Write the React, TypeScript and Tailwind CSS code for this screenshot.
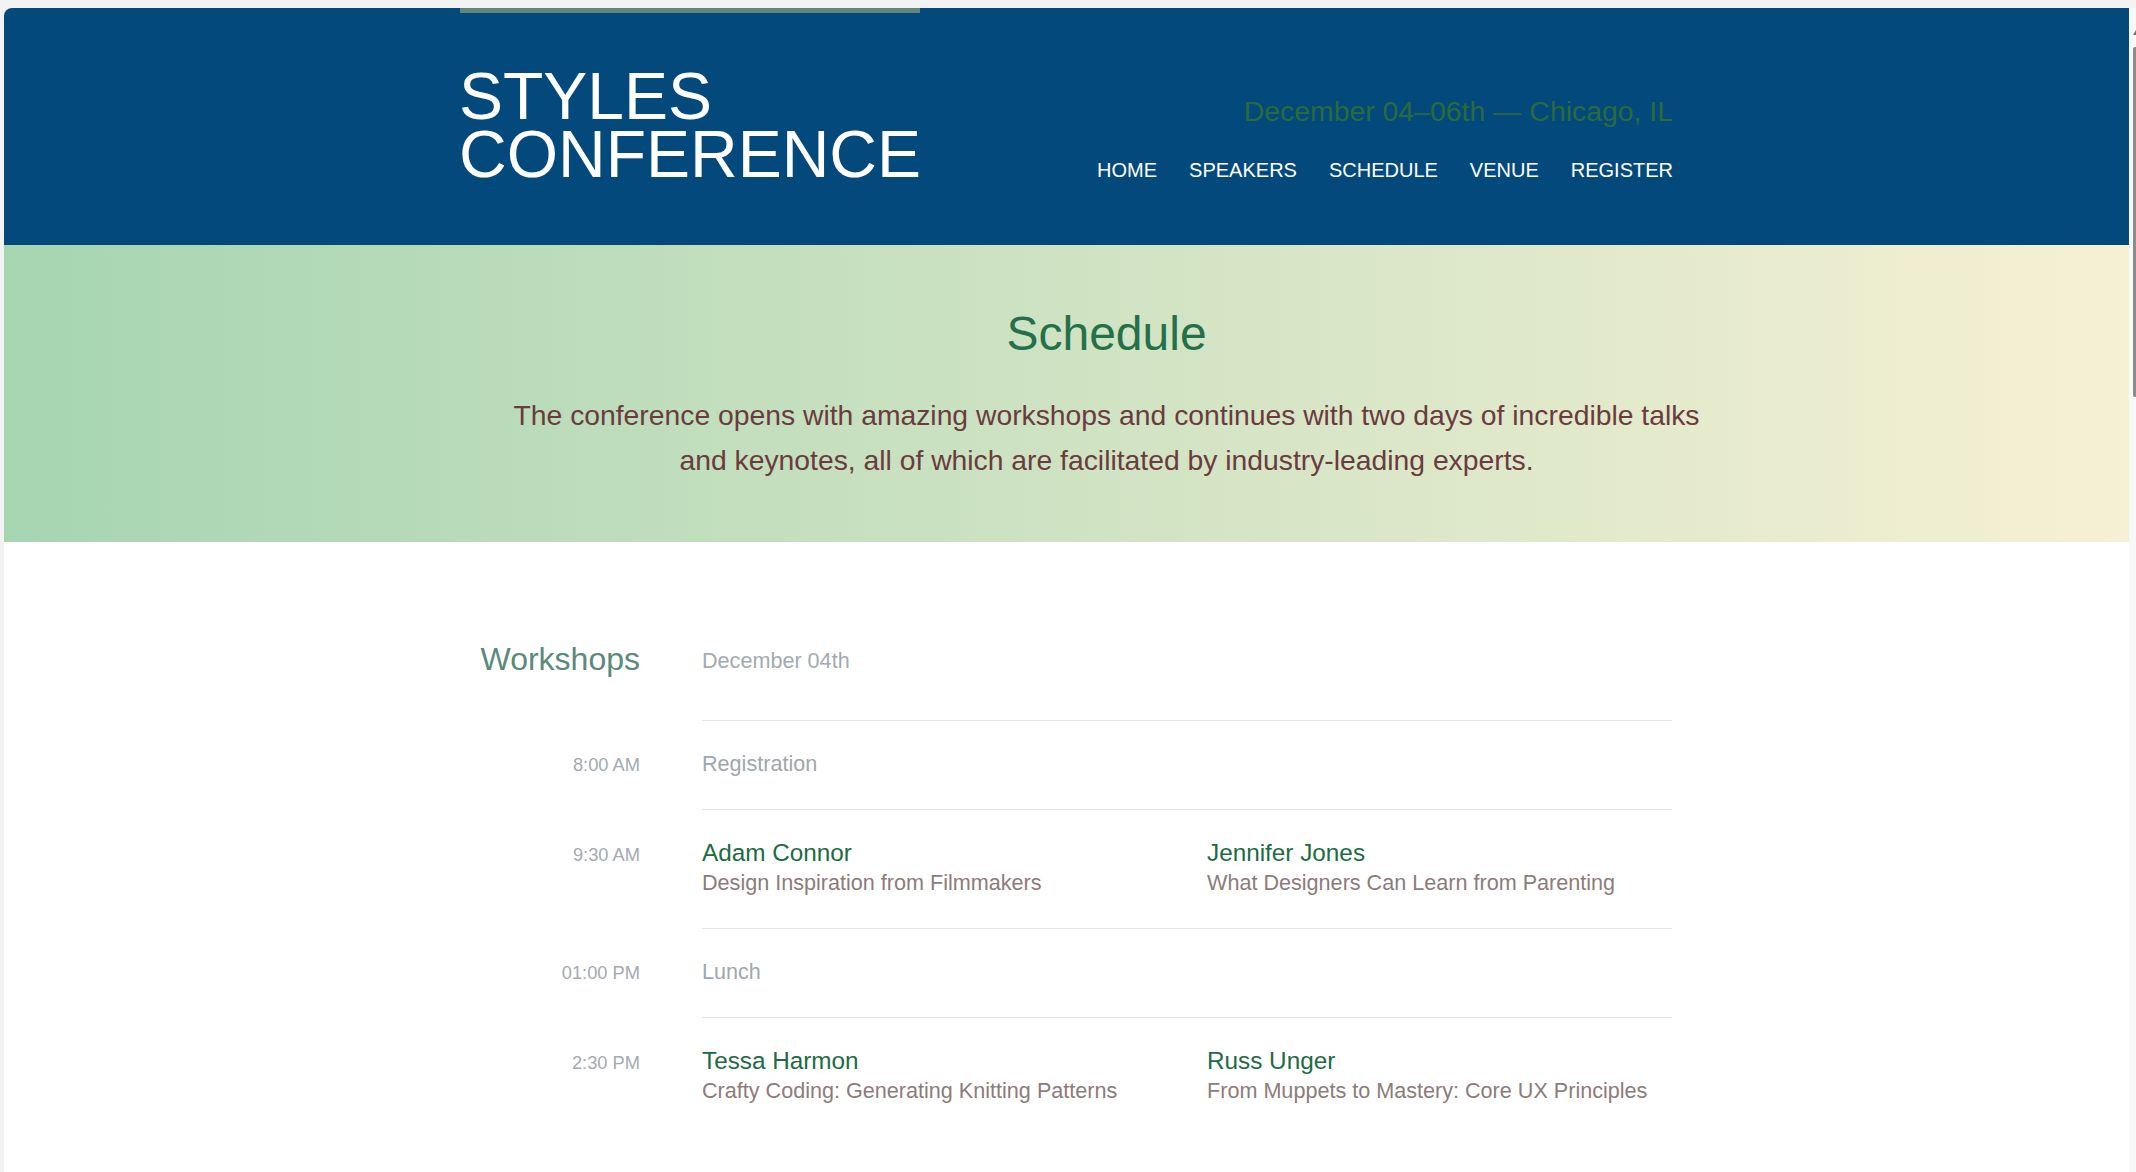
const font = { fontFamily: '"Liberation Sans", Arial, sans-serif' };

const nav = ['HOME', 'SPEAKERS', 'SCHEDULE', 'VENUE', 'REGISTER'];

type Talk = { name: string; title: string };
type Row = { time: string; label?: string; talks?: Talk[] };

const rows: Row[] = [
  { time: '8:00 AM', label: 'Registration' },
  {
    time: '9:30 AM',
    talks: [
      { name: 'Adam Connor', title: 'Design Inspiration from Filmmakers' },
      { name: 'Jennifer Jones', title: 'What Designers Can Learn from Parenting' },
    ],
  },
  { time: '01:00 PM', label: 'Lunch' },
  {
    time: '2:30 PM',
    talks: [
      { name: 'Tessa Harmon', title: 'Crafty Coding: Generating Knitting Patterns' },
      { name: 'Russ Unger', title: 'From Muppets to Mastery: Core UX Principles' },
    ],
  },
];

function ScheduleRow({ row }: { row: Row }) {
  return (
    <div className="flex items-baseline">
      <div className="w-[178px] mr-[62px] shrink-0 text-right text-[18.3px] leading-[32px] text-[#a3abb1]">
        {row.time}
      </div>
      <div className="flex-1 border-t border-[#e2e4e6] pt-[28px] pb-[30px]">
        {row.label ? (
          <p className="text-[21.6px] leading-[30px] text-[#9fa7ad]">{row.label}</p>
        ) : (
          <div className="grid grid-cols-2 gap-x-[40px]">
            {row.talks!.map((t) => (
              <div key={t.name}>
                <p className="text-[24.3px] leading-[30px] text-[#1c6b43]">{t.name}</p>
                <p className="text-[21.6px] leading-[30px] text-[#8c7c7a]">{t.title}</p>
              </div>
            ))}
          </div>
        )}
      </div>
    </div>
  );
}

export default function App() {
  return (
    <div className="w-[2136px] h-[1172px] overflow-hidden bg-[#f3f3f3] flex pt-[8px] pl-[4px]" style={font}>
      <main className="w-[2125px] rounded-tl-[8px] bg-white overflow-hidden">
        {/* HEADER */}
        <header className="bg-[#03497c] h-[237px]">
          <div className="w-[1213px] mx-auto flex justify-between">
            <div className="flex flex-col">
              <div className="h-[5px] w-[460px] bg-[#5f877a]" />
              <h1 className="mt-[54px] text-white text-[66px] leading-[58px] -ml-[1px]">
                STYLES
                <br />
                CONFERENCE
              </h1>
            </div>
            <div className="flex flex-col items-end pt-[87px]">
              <p className="text-[28.4px] leading-[32px] text-[#2a6b3e]">December 04–06th — Chicago, IL</p>
              <nav className="mt-[31px] flex gap-[32px] text-[20px] leading-[24px] text-white">
                {nav.map((n) => (
                  <span key={n}>{n}</span>
                ))}
              </nav>
            </div>
          </div>
        </header>

        {/* HERO */}
        <section className="bg-gradient-to-r from-[#a6d5b2] to-[#f6f0d4] pt-[60px] pb-[59px]">
          <div className="w-[1291px] mx-auto pl-[80px] text-center">
            <h2 className="text-[48px] leading-[58px] text-[#24704a]">Schedule</h2>
            <p className="mt-[30px] text-[28.3px] leading-[45px] text-[#6a3c3e]">
              The conference opens with amazing workshops and continues with two days of incredible talks and
              keynotes, all of which are facilitated by industry-leading experts.
            </p>
          </div>
        </section>

        {/* SCHEDULE */}
        <section className="pt-[97px] pb-[80px]">
          <div className="w-[1211px] mx-auto pl-[1px]">
            <div className="flex items-baseline">
              <h3 className="w-[178px] mr-[62px] shrink-0 text-right text-[32px] leading-[40px] text-[#5b8a7b]">
                Workshops
              </h3>
              <p className="flex-1 pb-[42px] text-[21.6px] leading-[30px] text-[#a3abb1] -translate-y-[2px]">
                December 04th
              </p>
            </div>
            {rows.map((r) => (
              <ScheduleRow key={r.time} row={r} />
            ))}
          </div>
        </section>
      </main>

      {/* scrollbar */}
      <div className="w-[7px] flex flex-col items-end bg-[#f8f8f8]">
        <div className="mt-[22px] w-0 h-0 border-l-[3px] border-b-[5px] border-l-transparent border-b-[#777]" />
        <div className="mt-[12px] w-[3px] h-[350px] rounded-l-[2px] bg-[#8c8c8c]" />
      </div>
    </div>
  );
}
